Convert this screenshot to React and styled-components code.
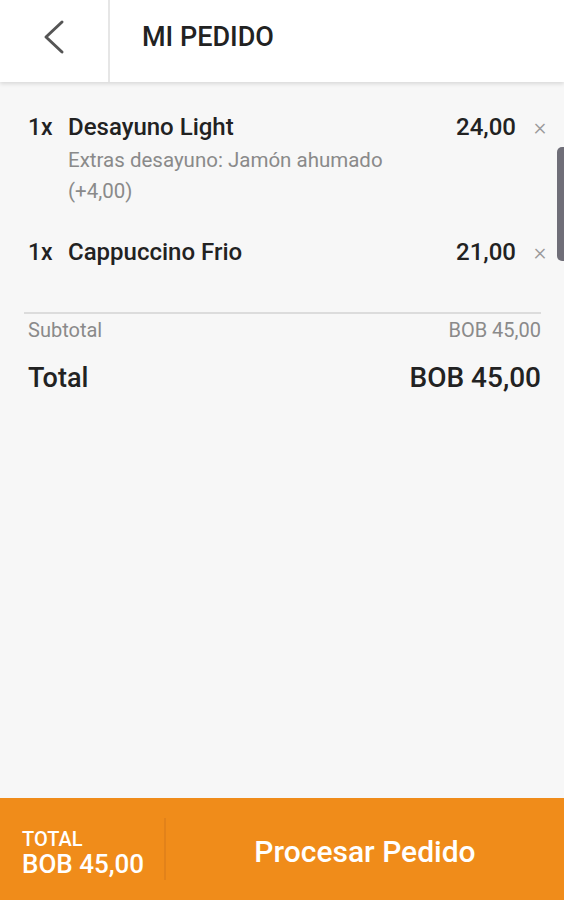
import React from 'react';
import styled, { createGlobalStyle } from 'styled-components';

const GlobalStyle = createGlobalStyle`
  html, body {
    margin: 0;
    padding: 0;
    background: #f7f7f7;
    font-family: Roboto, "Noto Sans", sans-serif;
  }
`;

const Page = styled.div`
  position: relative;
  width: 564px;
  height: 900px;
  display: flex;
  flex-direction: column;
  background: #f7f7f7;
  overflow: hidden;
`;

const Header = styled.header`
  display: flex;
  height: 82px;
  flex-shrink: 0;
  background: #fff;
  box-shadow: 0 2px 4px rgba(0, 0, 0, 0.12);
  z-index: 1;
`;

const BackButton = styled.button`
  width: 110px;
  border: none;
  border-right: 2px solid #e6e6e6;
  background: #fff;
  display: flex;
  align-items: center;
  justify-content: center;
  padding: 0 0 9px 0;
  cursor: pointer;
`;

const Title = styled.h1`
  margin: 0 0 8px 32px;
  align-self: center;
  font-size: 27px;
  font-weight: 500;
  color: #222;
`;

const Content = styled.main`
  flex: 1;
  padding: 30px 23px 0 28px;
`;

const Item = styled.div`
  display: grid;
  grid-template-columns: 40px 1fr auto 48px;
  align-items: baseline;
  margin-right: -23px;
  margin-bottom: ${p => p.last ? '45px' : '30px'};
`;

const Qty = styled.span`
  font-size: 23px;
  font-weight: 500;
  color: #222;
`;

const Name = styled.div`
  font-size: 24px;
  font-weight: 500;
  color: #222;
  line-height: 30px;
`;

const Extra = styled.div`
  font-size: 20.5px;
  font-weight: 400;
  color: #8a8a8a;
  line-height: 31px;
  margin-top: 3px;
  max-width: 330px;
`;

const Price = styled.span`
  font-size: 24px;
  font-weight: 500;
  color: #222;
`;

const Remove = styled.button`
  border: none;
  background: none;
  padding: 0;
  text-align: center;
  font-size: 24px;
  font-weight: 300;
  color: #9a9a9a;
  font-family: inherit;
  cursor: pointer;
`;

const Divider = styled.hr`
  margin: 0 0 0 -4px;
  border: none;
  border-top: 2px solid #dcdcdc;
`;

const SummaryRow = styled.div`
  display: flex;
  justify-content: space-between;
  align-items: center;
  padding-top: ${p => p.big ? '20px' : '4px'};
  line-height: ${p => p.big ? '32px' : '24px'};
  font-size: ${p => p.big ? '27px' : '20px'};
  font-weight: ${p => p.big ? 500 : 400};
  color: ${p => p.big ? '#222' : '#8a8a8a'};

  & > span:last-child {
    font-size: ${p => p.big ? '28px' : '20px'};
  }
`;

const Scrollbar = styled.div`
  position: absolute;
  right: 0;
  top: 147px;
  width: 7px;
  height: 114px;
  background: #6f6e78;
  border-radius: 5px 0 0 5px;
`;

const Footer = styled.footer`
  height: 102px;
  flex-shrink: 0;
  display: flex;
  background: #f08c1a;
  color: #fff;
`;

const FooterTotal = styled.div`
  width: 142px;
  padding-left: 22px;
  border-right: 2px solid #e2821a;
  display: flex;
  flex-direction: column;
  justify-content: center;
  font-weight: 500;
  margin: 20px 0;
  padding-top: 7px;
`;

const FooterLabel = styled.span`
  font-size: 20px;
  line-height: 22px;
`;

const FooterAmount = styled.span`
  font-size: 26px;
  line-height: 28px;
`;

const ProcessButton = styled.button`
  flex: 1;
  border: none;
  background: none;
  color: #fff;
  font-family: inherit;
  font-size: 30px;
  font-weight: 500;
  cursor: pointer;
  padding: 4px 0 0 0;
`;

const BackIcon = () => (
  <svg width="26" height="36" viewBox="0 0 26 36" fill="none">
    <path d="M21 3 L5 18 L21 33" stroke="#555" strokeWidth="3" strokeLinecap="round" strokeLinejoin="round" />
  </svg>
);

const items = [
  { qty: 1, name: 'Desayuno Light', price: '24,00', extras: 'Extras desayuno: Jamón ahumado (+4,00)' },
  { qty: 1, name: 'Cappuccino Frio', price: '21,00' },
];

export default function App() {
  return (
    <Page>
      <GlobalStyle />
      <Header>
        <BackButton aria-label="Volver"><BackIcon /></BackButton>
        <Title>MI PEDIDO</Title>
      </Header>
      <Content>
        {items.map((it, i) => (
          <Item key={it.name} last={i === items.length - 1}>
            <Qty>{it.qty}x</Qty>
            <div>
              <Name>{it.name}</Name>
              {it.extras && <Extra>{it.extras}</Extra>}
            </div>
            <Price>{it.price}</Price>
            <Remove aria-label="Quitar">×</Remove>
          </Item>
        ))}
        <Divider />
        <SummaryRow>
          <span>Subtotal</span>
          <span>BOB 45,00</span>
        </SummaryRow>
        <SummaryRow big>
          <span>Total</span>
          <span>BOB 45,00</span>
        </SummaryRow>
      </Content>
      <Scrollbar />
      <Footer>
        <FooterTotal>
          <FooterLabel>TOTAL</FooterLabel>
          <FooterAmount>BOB 45,00</FooterAmount>
        </FooterTotal>
        <ProcessButton>Procesar Pedido</ProcessButton>
      </Footer>
    </Page>
  );
}
